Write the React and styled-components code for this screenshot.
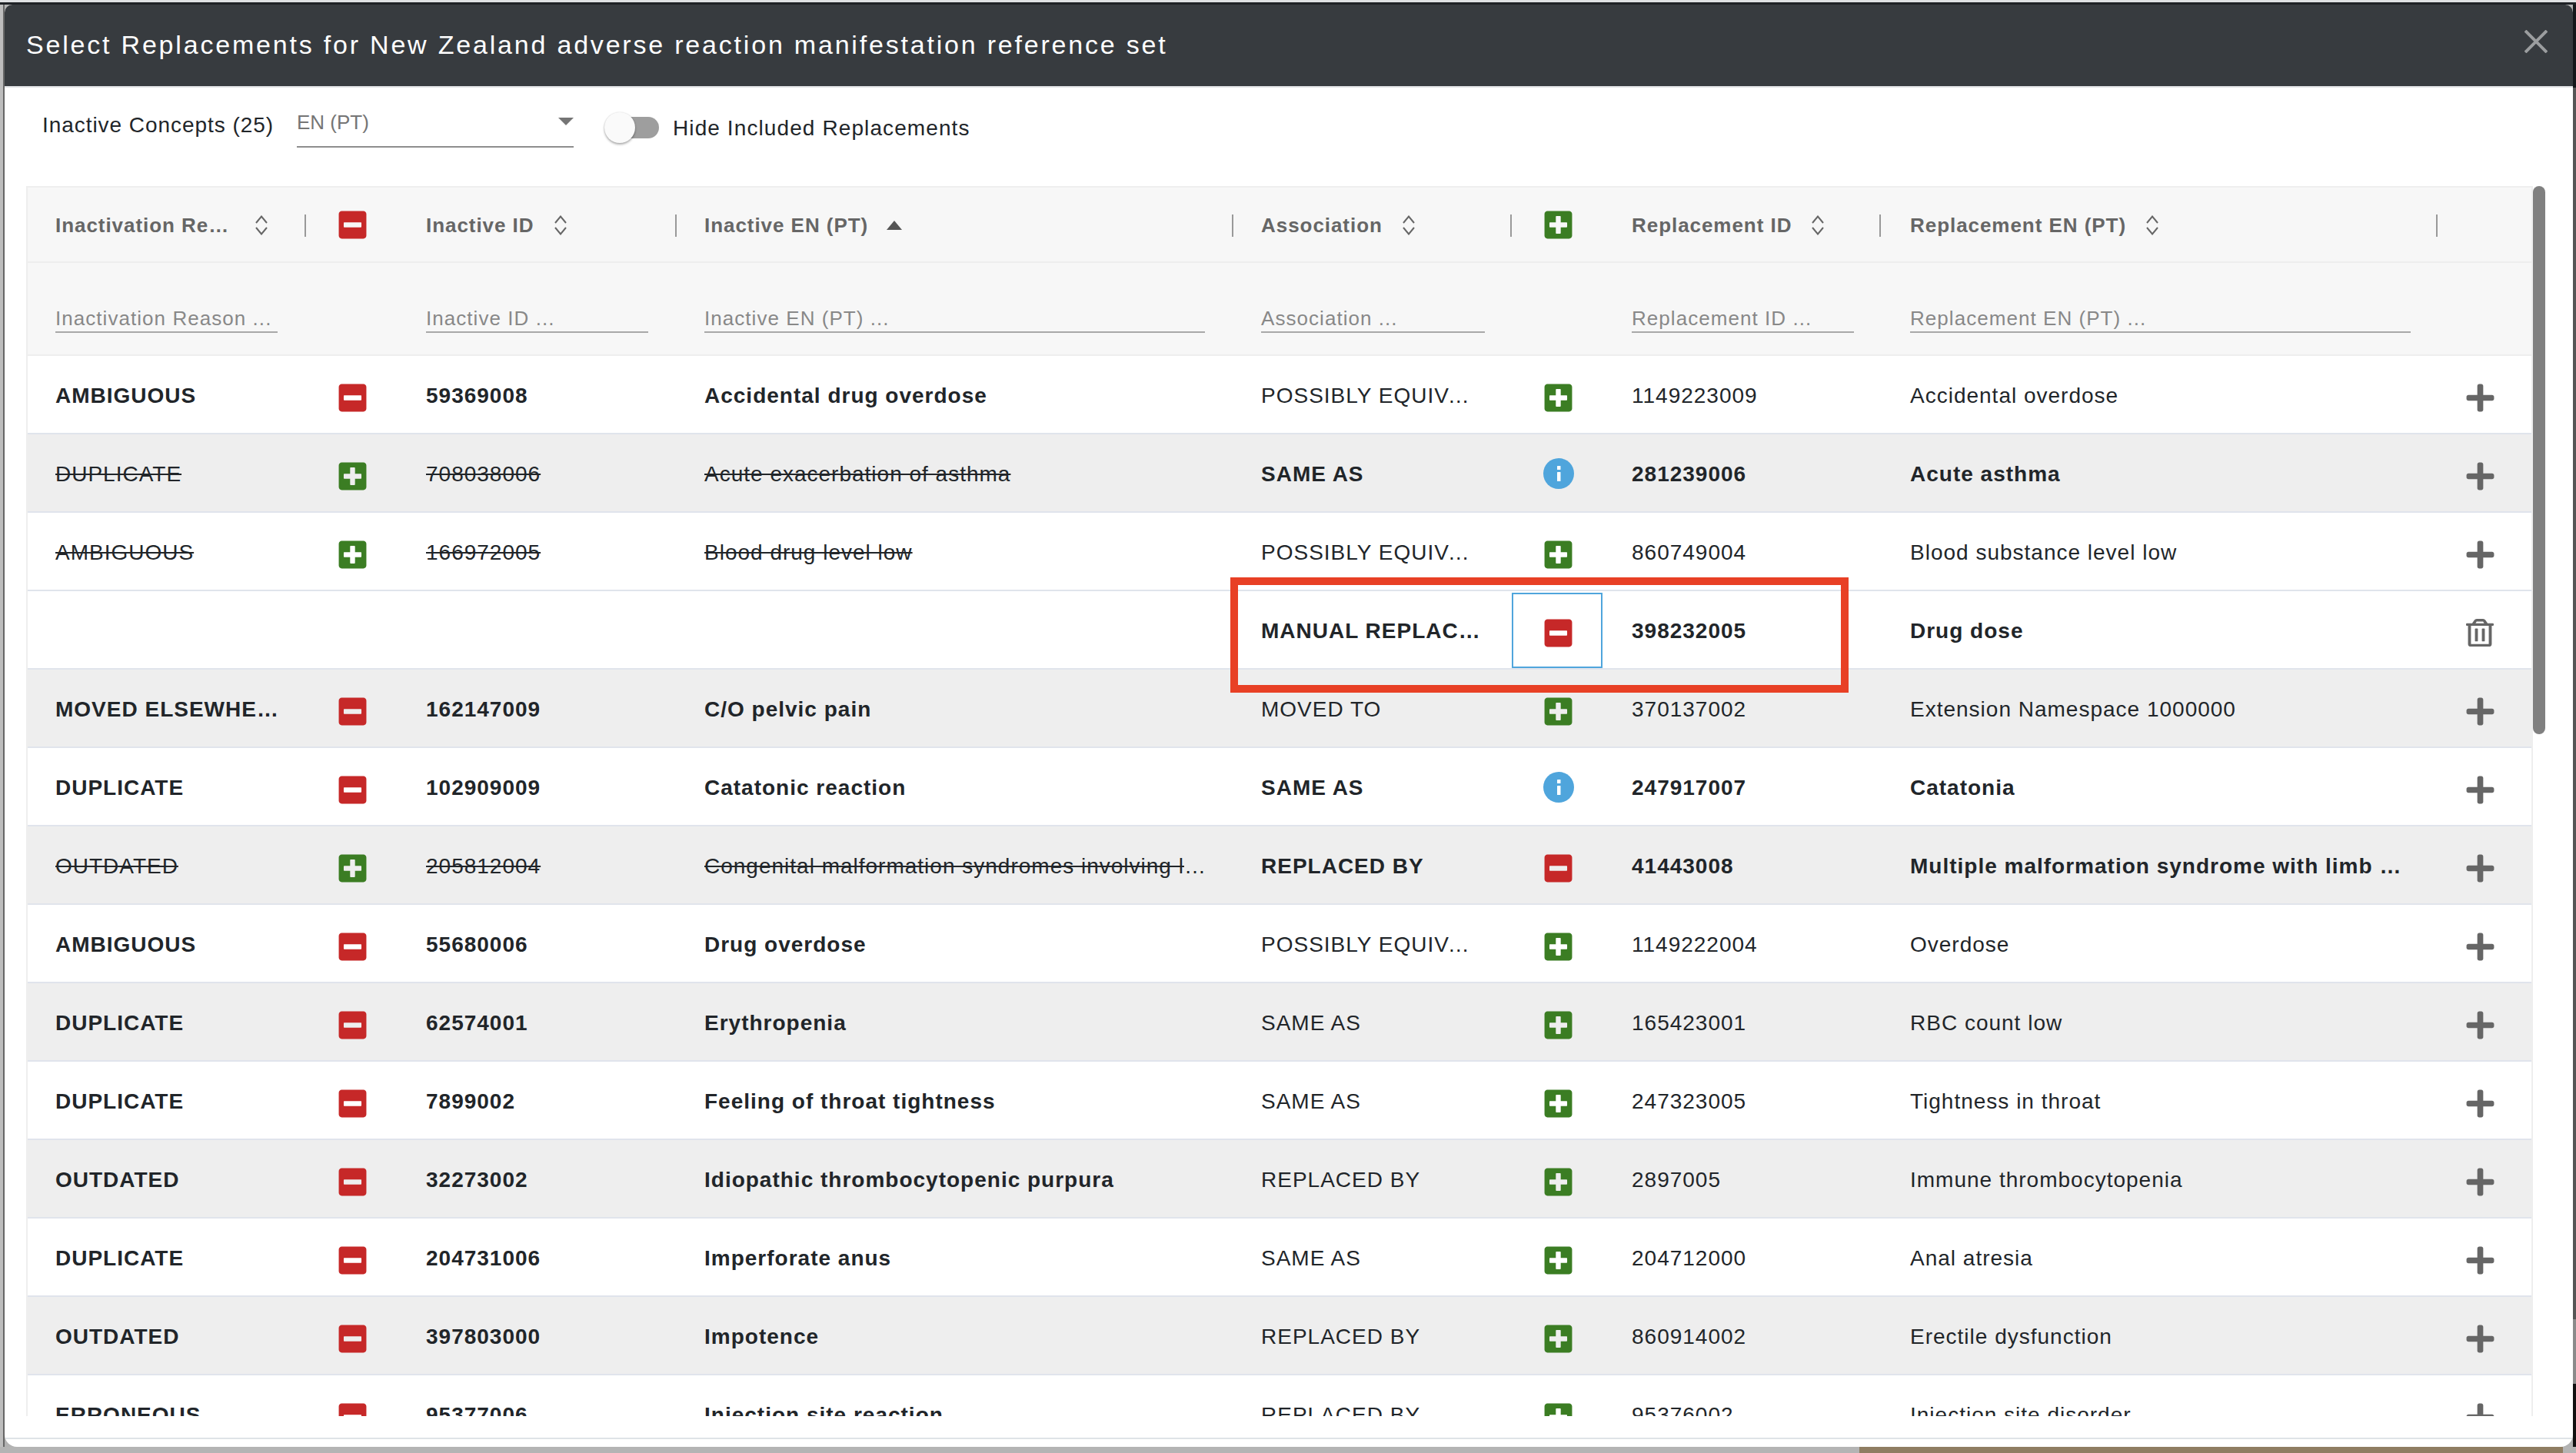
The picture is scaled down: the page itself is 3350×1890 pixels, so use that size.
import React from "react";
import styled, { createGlobalStyle } from "styled-components";
import { FaPlus, FaPlusSquare, FaMinusSquare, FaRegTrashAlt } from "react-icons/fa";

const GlobalStyle = createGlobalStyle`
  html, body { margin: 0; padding: 0; background: #b2b2b2; }
  * { box-sizing: border-box; }
  body { font-family: "Liberation Sans", Arial, sans-serif; }
`;

const COLS = "362px 118px 362px 724px 364px 118px 362px 724px 1fr";

const Page = styled.div`
  position: relative;
  width: 3350px;
  height: 1890px;
  overflow: hidden;
  display: flex;
  flex-direction: column;
`;
const TopEdge = styled.div`
  height: 6px;
  flex: none;
  background: linear-gradient(#dfe1e3 0 3px, #1f2226 3px);
`;
const Middle = styled.div`
  flex: 1;
  min-height: 0;
  display: flex;
`;
const LeftEdge = styled.div`
  width: 6px;
  flex: none;
  background: #bdbdbd;
  border-right: 2px solid #666;
`;
const RightEdge = styled.div`
  width: 4px;
  flex: none;
  background: linear-gradient(#14171a 0 108px, #555 108px 1710px, #8a8a8a 1710px 1794px, #111 1794px);
`;
const BottomEdge = styled.div`
  height: 8px;
  flex: none;
  display: flex;
  background: #b4b4b4;
`;
const BottomWood = styled.div`
  margin-left: 2418px;
  width: 915px;
  background: #8f7d62;
`;
const Modal = styled.div`
  flex: 1;
  min-width: 0;
  display: flex;
  flex-direction: column;
  background: #fff;
  border-radius: 10px 10px 16px 16px;
  overflow: hidden;
`;
const Header = styled.header`
  height: 108px;
  flex: none;
  display: flex;
  align-items: center;
  justify-content: space-between;
  padding: 0 33px 2px 28px;
  background: #373b3f;
  border-bottom: 2px solid #e2e4e6;
`;
const Title = styled.h1`
  margin: 0;
  font-size: 34px;
  font-weight: 400;
  letter-spacing: 2.8px;
  color: #fff;
  white-space: nowrap;
`;
const CloseIcon = styled.svg`
  width: 30px;
  height: 30px;
  margin-bottom: 9px;
  stroke: #9b9d9f;
  stroke-width: 4;
`;
const Toolbar = styled.div`
  height: 128px;
  flex: none;
  display: flex;
  align-items: flex-start;
  padding-left: 49px;
`;
const ConceptCount = styled.div`
  width: 331px;
  margin-top: 29px;
  font-size: 28px;
  line-height: 40px;
  letter-spacing: 0.95px;
  color: #212529;
  white-space: nowrap;
`;
const Select = styled.div`
  width: 360px;
  height: 51px;
  margin-top: 27px;
  display: flex;
  justify-content: space-between;
  border-bottom: 2px solid #8e8e8e;
`;
const SelectValue = styled.span`
  font-size: 26px;
  line-height: 36px;
  color: #757575;
`;
const SelectArrow = styled.span`
  width: 0;
  height: 0;
  margin-top: 12px;
  border-left: 10px solid transparent;
  border-right: 10px solid transparent;
  border-top: 10px solid #757575;
`;
const SwitchTrack = styled.div`
  position: relative;
  width: 67px;
  height: 28px;
  margin: 38px 0 0 44px;
  border-radius: 14px;
  background: #9e9e9e;
`;
const SwitchThumb = styled.span`
  position: absolute;
  left: -4px;
  top: -6px;
  width: 40px;
  height: 40px;
  border-radius: 50%;
  background: #fafafa;
  box-shadow: 0 2px 3px rgba(0, 0, 0, 0.3), 0 0 2px rgba(0, 0, 0, 0.15);
`;
const SwitchLabel = styled.div`
  margin: 33px 0 0 18px;
  font-size: 28px;
  line-height: 40px;
  letter-spacing: 1.1px;
  color: #212529;
  white-space: nowrap;
`;
const TableArea = styled.div`
  height: 1600px;
  flex: none;
  display: flex;
  padding-left: 28px;
`;
const Table = styled.div`
  width: 3260px;
  flex: none;
  display: flex;
  flex-direction: column;
  overflow: hidden;
  border: 2px solid #eeeeee;
  border-bottom: 0;
`;
const ScrollTrack = styled.div`
  width: 16px;
  flex: none;
`;
const ScrollThumb = styled.div`
  height: 713px;
  border-radius: 8px;
  background: #808080;
`;
const HeadRow = styled.div`
  height: 98px;
  flex: none;
  display: grid;
  grid-template-columns: ${COLS};
  background: #f7f7f7;
  border-bottom: 2px solid #eeeeee;
`;
const FilterRow = styled(HeadRow)`
  height: 121px;
`;
const HeadCell = styled.div`
  min-width: 0;
  display: flex;
  align-items: center;
  padding: 2px 0 0 38px;
  &:first-child { padding-left: 36px; }
`;
const HeadIconCell = styled.div`
  display: flex;
  align-items: center;
  justify-content: center;
  padding-left: 2px;
`;
const HeadLabel = styled.span`
  max-width: ${(p) => p.$max || "none"};
  font-size: 26px;
  font-weight: 700;
  line-height: 40px;
  letter-spacing: 0.95px;
  color: #666;
  white-space: nowrap;
  overflow: hidden;
  text-overflow: ellipsis;
`;
const SortIcon = styled.svg`
  width: 20px;
  height: 26px;
  flex: none;
  margin-left: 24px;
  fill: none;
  stroke: #666;
  stroke-width: 2;
`;
const SortActive = styled.svg`
  width: 20px;
  height: 12px;
  flex: none;
  margin-left: 24px;
  fill: #555;
`;
const Separator = styled.span`
  width: 2px;
  height: 29px;
  flex: none;
  margin-left: auto;
  margin-right: ${(p) => (p.$shift ? "-2px" : "0")};
  background: #999;
`;
const FilterCell = styled.div`
  min-width: 0;
  padding: 55px 35px 0 38px;
  &:first-child { padding-left: 36px; padding-right: 37px; }
`;
const FilterInput = styled.div`
  height: 36px;
  font-size: 26px;
  line-height: 34px;
  letter-spacing: 1.05px;
  color: #888;
  border-bottom: 2px solid #a8a8a8;
  white-space: nowrap;
`;
const Body = styled.div`
  flex: 1;
  min-height: 0;
  overflow: hidden;
`;
const Row = styled.div`
  height: 102px;
  display: grid;
  grid-template-columns: ${COLS};
  background: ${(p) => (p.$shaded ? "#eeeeee" : "#ffffff")};
  border-bottom: 2px solid #e0e4ec;
`;
const TextCell = styled.div`
  min-width: 0;
  padding: 0 ${(p) => p.$pr || 35}px 0 38px;
  font-size: 28px;
  line-height: 104px;
  height: 100px;
  letter-spacing: 1px;
  font-weight: ${(p) => (p.$bold ? 700 : 400)};
  text-decoration: ${(p) => (p.$struck ? "line-through" : "none")};
  color: #212529;
  white-space: nowrap;
  overflow: hidden;
  text-overflow: ellipsis;
  &:first-child { padding-left: 36px; }
`;
const IconCell = styled.div`
  display: flex;
  align-items: center;
  justify-content: center;
  padding-top: ${(p) => (p.$info ? "2px" : "8px")};
  padding-left: ${(p) => (p.$focus ? "2px" : "3px")};
  ${(p) => p.$focus && "height: 98px; margin-top: 2px; padding-top: 6px; border: 2px solid #4fa5dc;"}
`;
const ActionCell = styled.div`
  display: flex;
  align-items: center;
  justify-content: center;
  padding: 8px 12px 0 0;
  color: #666;
`;
const Plus = styled(FaPlusSquare)`
  display: block;
  color: #3b7d23;
  font-size: 41px;
`;
const Minus = styled(FaMinusSquare)`
  display: block;
  color: #c62828;
  font-size: 41px;
`;
const AddIcon = styled(FaPlus)`
  display: block;
  font-size: 41px;
`;
const TrashIcon = styled(FaRegTrashAlt)`
  display: block;
  width: 36px;
  height: 36px;
`;
const InfoSvg = styled.svg`
  display: block;
  width: 40px;
  height: 40px;
`;
const Footer = styled.div`
  flex: 1;
  margin-top: 28px;
  border-top: 2px solid #dfe3e7;
`;
const Annotation = styled.div`
  position: absolute;
  left: 1600px;
  top: 751px;
  width: 804px;
  height: 150px;
  border: 10px solid #e84025;
  pointer-events: none;
`;

const InfoIcon = () => (
  <InfoSvg viewBox="0 0 40 40">
    <circle cx="20" cy="20" r="20" fill="#4fa5dc" />
    <rect x="18" y="10" width="4.5" height="5" rx="0.6" fill="#fff" />
    <rect x="18" y="18" width="4.5" height="12" rx="0.6" fill="#fff" />
  </InfoSvg>
);

const Sort = () => (
  <SortIcon viewBox="0 0 20 26">
    <path d="M3 10 L10 1.5 L17 10" />
    <path d="M3 16 L10 24.5 L17 16" />
  </SortIcon>
);

const heads = [
  ["Inactivation Reason", "234px", "sort", false],
  null,
  ["Inactive ID", null, "sort", true],
  ["Inactive EN (PT)", null, "up", true],
  ["Association", null, "sort", false],
  null,
  ["Replacement ID", null, "sort", false],
  ["Replacement EN (PT)", null, "sort", false],
];

const filters = [
  "Inactivation Reason ...",
  null,
  "Inactive ID ...",
  "Inactive EN (PT) ...",
  "Association ...",
  null,
  "Replacement ID ...",
  "Replacement EN (PT) ...",
  null,
];

const PE = "POSSIBLY EQUIVALENT TO";
const rows = [
  { s: 0, a: "on", reason: "AMBIGUOUS", id: "59369008", en: "Accidental drug overdose", assoc: PE, b: "plus", rid: "1149223009", ren: "Accidental overdose" },
  { s: 1, a: "off", reason: "DUPLICATE", id: "708038006", en: "Acute exacerbation of asthma", assoc: "SAME AS", b: "info", rid: "281239006", ren: "Acute asthma" },
  { s: 0, a: "off", reason: "AMBIGUOUS", id: "166972005", en: "Blood drug level low", assoc: PE, b: "plus", rid: "860749004", ren: "Blood substance level low" },
  { s: 0, a: "none", reason: "", id: "", en: "", assoc: "MANUAL REPLACEMENT", b: "focus", rid: "398232005", ren: "Drug dose", trash: true },
  { s: 1, a: "on", reason: "MOVED ELSEWHERE", id: "162147009", en: "C/O pelvic pain", assoc: "MOVED TO", b: "plus", rid: "370137002", ren: "Extension Namespace 1000000" },
  { s: 0, a: "on", reason: "DUPLICATE", id: "102909009", en: "Catatonic reaction", assoc: "SAME AS", b: "info", rid: "247917007", ren: "Catatonia" },
  { s: 1, a: "off", reason: "OUTDATED", id: "205812004", en: "Congenital malformation syndromes involving limbs", assoc: "REPLACED BY", b: "minus", rid: "41443008", ren: "Multiple malformation syndrome with limb involvement" },
  { s: 0, a: "on", reason: "AMBIGUOUS", id: "55680006", en: "Drug overdose", assoc: PE, b: "plus", rid: "1149222004", ren: "Overdose" },
  { s: 1, a: "on", reason: "DUPLICATE", id: "62574001", en: "Erythropenia", assoc: "SAME AS", b: "plus", rid: "165423001", ren: "RBC count low" },
  { s: 0, a: "on", reason: "DUPLICATE", id: "7899002", en: "Feeling of throat tightness", assoc: "SAME AS", b: "plus", rid: "247323005", ren: "Tightness in throat" },
  { s: 1, a: "on", reason: "OUTDATED", id: "32273002", en: "Idiopathic thrombocytopenic purpura", assoc: "REPLACED BY", b: "plus", rid: "2897005", ren: "Immune thrombocytopenia" },
  { s: 0, a: "on", reason: "DUPLICATE", id: "204731006", en: "Imperforate anus", assoc: "SAME AS", b: "plus", rid: "204712000", ren: "Anal atresia" },
  { s: 1, a: "on", reason: "OUTDATED", id: "397803000", en: "Impotence", assoc: "REPLACED BY", b: "plus", rid: "860914002", ren: "Erectile dysfunction" },
  { s: 0, a: "on", reason: "ERRONEOUS", id: "95377006", en: "Injection site reaction", assoc: "REPLACED BY", b: "plus", rid: "95376002", ren: "Injection site disorder" },
];

function DataRow({ r }) {
  const leftOn = r.a === "on";
  const struck = r.a === "off";
  const rightBold = r.b !== "plus";
  return (
    <Row $shaded={!!r.s}>
      <TextCell $bold={leftOn} $struck={struck} $pr={26}>{r.reason}</TextCell>
      <IconCell>
        {r.a === "on" && <Minus />}
        {r.a === "off" && <Plus />}
      </IconCell>
      <TextCell $bold={leftOn} $struck={struck}>{r.id}</TextCell>
      <TextCell $bold={leftOn} $struck={struck} $pr={31}>{r.en}</TextCell>
      <TextCell $bold={rightBold} $pr={39}>{r.assoc}</TextCell>
      <IconCell $info={r.b === "info"} $focus={r.b === "focus"}>
        {r.b === "plus" && <Plus />}
        {r.b === "info" && <InfoIcon />}
        {(r.b === "minus" || r.b === "focus") && <Minus />}
      </IconCell>
      <TextCell $bold={rightBold}>{r.rid}</TextCell>
      <TextCell $bold={rightBold} $pr={46}>{r.ren}</TextCell>
      <ActionCell>{r.trash ? <TrashIcon preserveAspectRatio="none" /> : <AddIcon />}</ActionCell>
    </Row>
  );
}

export default function App() {
  return (
    <Page>
      <GlobalStyle />
      <TopEdge />
      <Middle>
        <LeftEdge />
        <Modal>
          <Header>
            <Title>Select Replacements for New Zealand adverse reaction manifestation reference set</Title>
            <CloseIcon viewBox="0 0 30 30">
              <path d="M1 1 L29 29 M29 1 L1 29" />
            </CloseIcon>
          </Header>
          <Toolbar>
            <ConceptCount>Inactive Concepts (25)</ConceptCount>
            <Select>
              <SelectValue>EN (PT)</SelectValue>
              <SelectArrow />
            </Select>
            <SwitchTrack>
              <SwitchThumb />
            </SwitchTrack>
            <SwitchLabel>Hide Included Replacements</SwitchLabel>
          </Toolbar>
          <TableArea>
            <Table>
              <HeadRow>
                {heads.map((h, i) =>
                  h ? (
                    <HeadCell key={i}>
                      <HeadLabel $max={h[1]}>{h[0]}</HeadLabel>
                      {h[2] === "sort" ? (
                        <Sort />
                      ) : (
                        <SortActive viewBox="0 0 20 12">
                          <path d="M10 0 L20 12 L0 12 Z" />
                        </SortActive>
                      )}
                      <Separator $shift={h[3]} />
                    </HeadCell>
                  ) : (
                    <HeadIconCell key={i}>{i === 1 ? <Minus /> : <Plus />}</HeadIconCell>
                  )
                )}
                <HeadCell>
                  <span />
                </HeadCell>
              </HeadRow>
              <FilterRow>
                {filters.map((f, i) =>
                  f ? (
                    <FilterCell key={i}>
                      <FilterInput>{f}</FilterInput>
                    </FilterCell>
                  ) : (
                    <div key={i} />
                  )
                )}
              </FilterRow>
              <Body>
                {rows.map((r, i) => (
                  <DataRow key={i} r={r} />
                ))}
              </Body>
            </Table>
            <ScrollTrack>
              <ScrollThumb />
            </ScrollTrack>
          </TableArea>
          <Footer />
        </Modal>
        <RightEdge />
      </Middle>
      <BottomEdge>
        <BottomWood />
      </BottomEdge>
      <Annotation />
    </Page>
  );
}
